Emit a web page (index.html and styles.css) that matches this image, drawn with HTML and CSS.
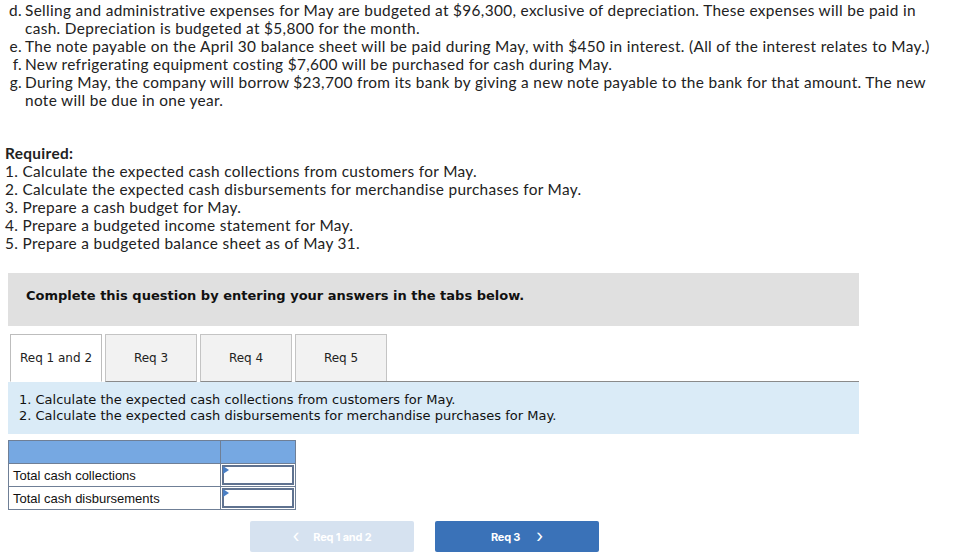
FILE: index.html
```html
<!DOCTYPE html>
<html>
<head>
<meta charset="utf-8">
<link rel="stylesheet" href="styles.css">
</head>
<body>
<div class="page">
  <div class="items">
    <div class="item"><span class="mk">d.</span><span class="tx">Selling and administrative expenses for May are budgeted at $96,300, exclusive of depreciation. These expenses will be paid in cash. Depreciation is budgeted at $5,800 for the month.</span></div>
    <div class="item"><span class="mk">e.</span><span class="tx">The note payable on the April 30 balance sheet will be paid during May, with $450 in interest. (All of the interest relates to May.)</span></div>
    <div class="item"><span class="mk">f.</span><span class="tx">New refrigerating equipment costing $7,600 will be purchased for cash during May.</span></div>
    <div class="item"><span class="mk">g.</span><span class="tx">During May, the company will borrow $23,700 from its bank by giving a new note payable to the bank for that amount. The new note will be due in one year.</span></div>
  </div>

  <div class="required">
    <div class="req-title">Required:</div>
    <div>1. Calculate the expected cash collections from customers for May.</div>
    <div>2. Calculate the expected cash disbursements for merchandise purchases for May.</div>
    <div>3. Prepare a cash budget for May.</div>
    <div>4. Prepare a budgeted income statement for May.</div>
    <div>5. Prepare a budgeted balance sheet as of May 31.</div>
  </div>

  <div class="notice">Complete this question by entering your answers in the tabs below.</div>

  <div class="tabs">
    <div class="tab active">Req 1 and 2</div>
    <div class="tab">Req 3</div>
    <div class="tab">Req 4</div>
    <div class="tab">Req 5</div>
    <div class="tab-fill"></div>
  </div>
  <div class="panel">
    <div>1. Calculate the expected cash collections from customers for May.</div>
    <div>2. Calculate the expected cash disbursements for merchandise purchases for May.</div>
  </div>

  <table class="grid">
    <tr class="head"><td class="c1"></td><td class="c2"></td></tr>
    <tr><td class="c1">Total cash collections</td><td class="c2 inp"><div class="box"><span class="tri"></span></div></td></tr>
    <tr><td class="c1">Total cash disbursements</td><td class="c2 inp"><div class="box"><span class="tri"></span></div></td></tr>
  </table>

  <div class="nav">
    <div class="btn prev"><span class="chev">&lsaquo;</span>Req 1 and 2</div>
    <div class="btn next">Req 3<span class="chev">&rsaquo;</span></div>
  </div>
</div>
</body>
</html>
```
FILE: styles.css
```css
* { box-sizing: border-box; }
html, body { margin: 0; padding: 0; background: #fff; }
body { font-family: Lato, "Open Sans", sans-serif; color: #222; }
.page { padding: 1px 0 0 5px; }

.items { margin-left: 3px; width: 928px; font-size: 15.4px; line-height: 18px; letter-spacing: 0.33px; }
.item { display: flex; }
.mk { width: 14px; flex: none; text-align: right; }
.tx { padding-left: 3px; }

.required { margin-top: 35px; font-size: 15.4px; line-height: 18px; letter-spacing: 0.33px; }
.req-title { font-weight: 700; }

.notice {
  margin: 21px 0 0 3px;
  width: 851px;
  height: 53px;
  background: #e0e0e0;
  font-family: "DejaVu Sans", Verdana, sans-serif;
  font-weight: 700;
  font-size: 13px;
  color: #111;
  padding: 14px 0 0 18px;
  line-height: 17px;
}

.tabs { display: flex; width: 849px; margin: 8px 0 0 5px; height: 48px; align-items: stretch; }
.tab {
  width: 92px;
  margin-right: 3px;
  background: #f2f2f2;
  border: 1px solid #c4c4c4;
  border-bottom: 1px solid #8a8a8a;
  font-family: "DejaVu Sans", Verdana, sans-serif;
  font-size: 12px;
  color: #222;
  display: flex;
  align-items: center;
  justify-content: center;
}
.tab.active { background: #fff; border-color: #bdbdbd; border-bottom: 1px solid #fff; }
.tab-fill { flex: 1; border-bottom: 1px solid #8a8a8a; margin-left: -3px; }
.tabs .tab:nth-child(4) { margin-right: 0; }

.panel {
  margin-left: 3px;
  width: 851px;
  height: 52px;
  background: #daebf7;
  font-family: "DejaVu Sans", Verdana, sans-serif;
  font-size: 13px;
  line-height: 16px;
  color: #111;
  padding: 10px 0 0 11px;
}

.grid {
  margin: 6px 0 0 3px;
  border-collapse: collapse;
  font-family: "Liberation Sans", Arial, sans-serif;
  font-size: 13px;
  color: #111;
}
.grid td { border: 1px solid #6f7f96; height: 23px; padding: 0; }
.grid .c1 { width: 212px; padding-left: 4px; }
.grid .c2 { width: 75px; }
.grid .head td { background: #76a8e2; }
.grid .inp { padding: 1px; }
.box { position: relative; height: 20px; border: 2px solid #5f7290; background: #fff; }
.tri {
  position: absolute; left: -1px; top: -1px;
  width: 0; height: 0;
  border-top: 4px solid transparent;
  border-bottom: 4px solid transparent;
  border-left: 6px solid #4a7fc4;
}

.nav { display: flex; gap: 21px; margin: 11px 0 0 245px; }
.btn {
  width: 164px; height: 31px; border-radius: 2px;
  display: flex; align-items: center; justify-content: center;
  font-family: Inter, "Liberation Sans", sans-serif;
  font-weight: 700; font-size: 11px; color: #fff;
  letter-spacing: -0.2px;
}
.btn.prev { background: #d6e2f0; }
.btn.next { background: #3a72b8; }
.chev { font-size: 18px; font-weight: 400; line-height: 1; position: relative; top: -1px; }
.prev .chev { margin-right: 14px; }
.next .chev { margin-left: 16px; }
```
